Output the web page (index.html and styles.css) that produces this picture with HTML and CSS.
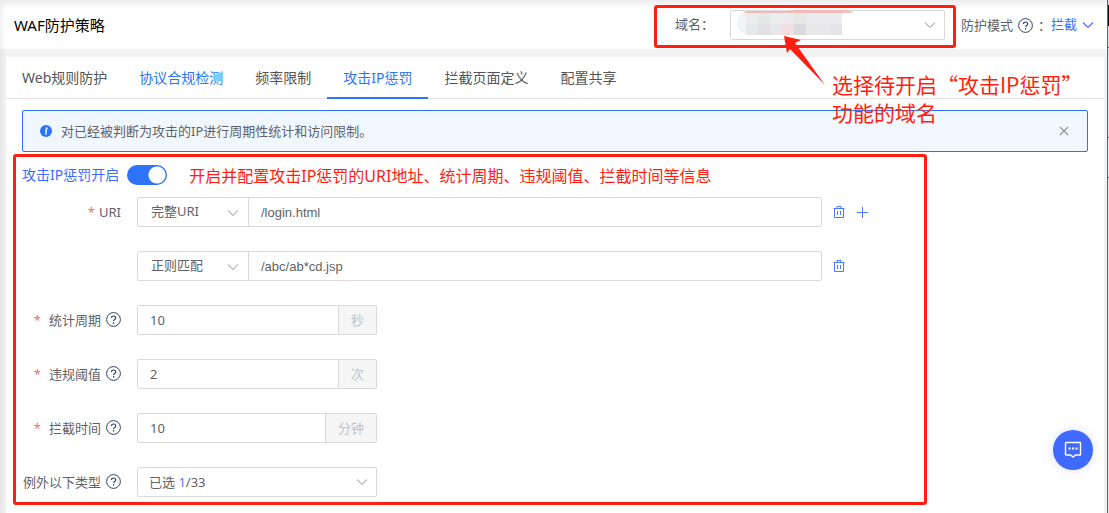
FILE: index.html
```html
<!DOCTYPE html>
<html lang="zh-cn">

<head>
    <meta charset="utf-8">
    <meta name="viewport" content="width=device-width, initial-scale=1">
    <title>WAF防护策略</title>
    <link rel="stylesheet" href="styles.css">
</head>

<body>
    <!--公用图标-->
    <svg class="symbols" aria-hidden="true">
        <symbol id="help" viewBox="0 0 15 15">
            <circle cx="7.5" cy="7.5" r="6.900" fill="none" stroke="currentColor"/>
            <path d="M5.4 6.1c0-2.9 4.3-2.7 4.3-.2 0 1.500-2.1 1.500-2.1 3.1" fill="none" stroke="currentColor" stroke-width="1.200"/>
            <circle cx="7.6" cy="10.9" r=".8" fill="currentColor"/>
        </symbol>
        <symbol id="down" viewBox="0 0 12 8">
            <path d="M1 1.5l5 5 5-5" fill="none" stroke="currentColor" stroke-width="1.200"/>
        </symbol>
        <symbol id="trash" viewBox="0 0 12 12">
            <path d="M.5 2.5h11M1.5 2.5v9h9v-9M4 2.5v-2h4v2M4.5 5v4M7.5 5v4" fill="none" stroke="currentColor"/>
        </symbol>
    </svg>

    <div class="page">
        <header class="header">
            <h1 class="title">WAF防护策略</h1>
            <div class="domain">
                <label for="domain">域名：</label>
                <div class="select domain-select">
                    <select id="domain"><option></option></select>
                    <svg class="mask" viewBox="0 0 118 26" aria-hidden="true">
                        <path d="M17 1h-3a13 12 0 0 0 0 24h3z" fill="#f4f4f4"/>
                        <path d="M10 1h12v13h-12zM34 1h12v13h-12z" fill="#ebeeed"/>
                        <path d="M22 1h12v13h-12zM58 1h12v13h-12z" fill="#e7e7e8"/>
                        <path d="M46 1h12v13h-12zM70 1h36v13h-36z" fill="#ececef"/>
                        <path d="M10 14h12v11h-12zM34 14h12v11h-12z" fill="#e7e8eb"/>
                        <path d="M22 14h12v11h-12z" fill="#e1e1e3"/>
                        <path d="M46 14h12v11h-12z" fill="#f1dfe0"/>
                        <path d="M58 14h12v11h-12z" fill="#dadade"/>
                        <path d="M70 14h24v11h-24z" fill="#e8e8e8"/>
                        <path d="M94 14h12v11h-12z" fill="#e3e5e7"/>
                        <path d="M7 2l4-1h41l6-1h52l8 2-4 1h-104z" fill="#f4bbb6"/>
                    </svg>
                    <svg class="arrow"><use href="#down"/></svg>
                </div>
                <svg class="pointer" viewBox="0 0 42 50" aria-hidden="true">
                    <path d="M0 0l17 4-6 3 30 42L6 13l-3 4z" fill="#ff1e10"/>
                </svg>
                <p class="note note-domain"><span>选择待开启“攻击IP惩罚”</span><span>功能的域名</span></p>
            </div>
            <div class="mode">
                <label for="mode">防护模式</label>
                <svg class="help"><use href="#help"/></svg>
                <span class="colon">：</span>
                <div class="select mode-select">
                    <select id="mode"><option>拦截</option></select>
                    <svg class="arrow"><use href="#down"/></svg>
                </div>
            </div>
        </header>

        <main class="card">
            <nav class="tabs">
                <a href="#">Web规则防护</a>
                <a href="#" class="blue">协议合规检测</a>
                <a href="#">频率限制</a>
                <a href="#" class="blue active">攻击IP惩罚</a>
                <a href="#">拦截页面定义</a>
                <a href="#">配置共享</a>
            </nav>

            <div class="alert">
                <svg class="info" viewBox="0 0 12 12" aria-hidden="true">
                    <circle cx="6" cy="6" r="6" fill="#2d74fb"/>
                    <circle cx="6.700" cy="3.200" r="1" fill="#fff"/>
                    <path d="M5 5.200h1.500l-.9 3.800h1.200" fill="none" stroke="#fff" stroke-width="1.200"/>
                </svg>
                <span>对已经被判断为攻击的IP进行周期性统计和访问限制。</span>
                <button type="button" class="close" aria-label="关闭">
                    <svg viewBox="0 0 10 10"><path d="M1 1l8 8M9 1l-8 8" fill="none" stroke="#909399" stroke-width="1.200"/></svg>
                </button>
            </div>

            <form class="form">
                <div class="switch-row">
                    <label for="punish">攻击IP惩罚开启</label>
                    <input type="checkbox" id="punish" class="switch" checked>
                    <p class="note">开启并配置攻击IP惩罚的URI地址、统计周期、违规阈值、拦截时间等信息</p>
                </div>

                <div class="row">
                    <label class="label" for="uri1"><i>*</i>URI</label>
                    <div class="group uri">
                        <div class="select">
                            <select aria-label="匹配方式"><option>完整URI</option></select>
                            <svg class="arrow"><use href="#down"/></svg>
                        </div>
                        <input type="text" id="uri1" value="/login.html">
                    </div>
                    <div class="actions">
                        <button type="button" aria-label="删除"><svg><use href="#trash"/></svg></button>
                        <button type="button" aria-label="添加"><svg viewBox="0 0 12 12"><path d="M0 6.500h11M5.500 1v11" fill="none" stroke="currentColor"/></svg></button>
                    </div>
                </div>

                <div class="row">
                    <span class="label"></span>
                    <div class="group uri">
                        <div class="select">
                            <select aria-label="匹配方式"><option>正则匹配</option></select>
                            <svg class="arrow"><use href="#down"/></svg>
                        </div>
                        <input type="text" aria-label="URI" value="/abc/ab*cd.jsp">
                    </div>
                    <div class="actions">
                        <button type="button" aria-label="删除"><svg><use href="#trash"/></svg></button>
                    </div>
                </div>

                <div class="row">
                    <label class="label" for="period"><i class="wide">*</i>统计周期<svg class="help"><use href="#help"/></svg></label>
                    <div class="group number">
                        <input type="text" id="period" value="10">
                        <span class="unit">秒</span>
                    </div>
                </div>

                <div class="row">
                    <label class="label" for="limit"><i class="wide">*</i>违规阈值<svg class="help"><use href="#help"/></svg></label>
                    <div class="group number">
                        <input type="text" id="limit" value="2">
                        <span class="unit">次</span>
                    </div>
                </div>

                <div class="row">
                    <label class="label" for="block"><i class="wide">*</i>拦截时间<svg class="help"><use href="#help"/></svg></label>
                    <div class="group number">
                        <input type="text" id="block" value="10">
                        <span class="unit">分钟</span>
                    </div>
                </div>

                <div class="row">
                    <label class="label" for="except">例外以下类型<svg class="help"><use href="#help"/></svg></label>
                    <div class="select except">
                        <select id="except"><option></option></select>
                        <span class="count">已选 <b>1</b>/33</span>
                        <svg class="arrow"><use href="#down"/></svg>
                    </div>
                </div>
            </form>
        </main>
    </div>
    <div class="edge"></div>

    <button type="button" class="chat" aria-label="在线咨询">
        <svg viewBox="0 0 18 18">
            <path d="M2 1.500h14q.5 0 .5.5v11.500q0 .5-.5.5h-4.500l-2.500 2-2.500-2h-4.500q-.5 0-.5-.5v-11.500q0-.5.5-.5z" fill="none" stroke="#fff" stroke-width="1.400"/>
            <path d="M4.500 7.500h2M8 7.500h2M11.500 7.500h2" stroke="#fff" stroke-width="2"/>
        </svg>
    </button>
</body>
</html>
```
FILE: styles.css
```css
*{
    box-sizing: border-box;
}
body{
    display: flex;
    min-height: 100vh;
    margin: 0;
    background: #f2f2f2;
    color: #606266;
    font-family: "Noto Sans", "Noto Sans CJK SC", sans-serif;
    font-size: 13px;
    line-height: 20px;
}
p, h1{
    margin: 0;
}
input, select, button{
    margin: 0;
    color: inherit;
    font: inherit;
}
button{
    display: flex;
    padding: 0;
    border: none;
    background: none;
}
.symbols{
    position: absolute;
    width: 0;
    height: 0;
}
.page{
    display: flex;
    flex: 1;
    flex-direction: column;
    min-width: 0;
    background: linear-gradient(to right, #e6e6e6, #f2f2f2 6px);
}
/*右侧窗口边线*/
.edge{
    width: 2px;
    border-left: 1px solid #2f6db5;
    background: linear-gradient(#d8dfe8 5px, #111 5px, #111 26px, #d8dfe8 26px, #d8dfe8 47px, #555 47px, #555 48px, #d8dfe8 48px, #d8dfe8 137px, #2d74fb 137px, #2d74fb 138px, #e6eef8 138px, #e6eef8 177px, #2d74fb 177px, #2d74fb 178px, #e4e4e4 178px);
}

/*顶部*/
.header{
    display: flex;
    align-items: center;
    height: 49px;
    padding: 4px 13px 0 14px;
    background: linear-gradient(#ececec, rgba(255,255,255,0) 9px), linear-gradient(to right, #f2f2f2, #fff 6px);
}
.title{
    padding-bottom: 3px;
    color: #000;
    font-size: 15px;
    font-weight: normal;
}
.domain{
    position: relative;
    display: flex;
    align-items: center;
    margin-left: auto;
    padding: 2px 8px 5px 18px;
    border: 3px solid #ff1e10;
    border-radius: 3px;
}
.domain label{
    padding-bottom: 2px;
}
.domain-select{
    width: 215px;
    margin-left: 16px;
}
.mask{
    position: absolute;
    top: 0;
    left: 6px;
    width: 118px;
    height: 26px;
}
.pointer{
    position: absolute;
    top: 28px;
    left: 127px;
    width: 42px;
    height: 50px;
}
.note{
    padding-top: 2px;
    color: #ff1e10;
    font-size: 16px;
}
.note-domain{
    position: absolute;
    top: 60px;
    left: 175px;
    font-family: "Noto Sans CJK SC", sans-serif;
    font-size: 21px;
    line-height: 28px;
    white-space: nowrap;
}
.note-domain span{
    display: block;
}
.mode{
    display: flex;
    align-items: center;
    margin-left: 5px;
    padding-bottom: 3px;
}
.help{
    width: 15px;
    height: 15px;
    margin-left: 5px;
    color: #34435e;
}
.colon{
    width: 18px;
    padding-left: 5px;
}
.mode-select{
    width: 43px;
    color: #2d74fb;
}

/*下拉框*/
.select{
    position: relative;
}
.select select{
    display: block;
    width: 100%;
    height: 30px;
    padding: 0 30px 0 12px;
    border: 1px solid #d9d9d9;
    border-radius: 2px;
    background: #fff;
    appearance: none;
}
.select .arrow{
    position: absolute;
    top: 11px;
    right: 9px;
    width: 12px;
    height: 8px;
    color: #b8bcc4;
    pointer-events: none;
}
.mode-select select{
    padding: 0 0 2px;
    border: none;
    background: none;
}
.mode-select .arrow{
    right: 0;
    color: #4d6bfe;
}

/*内容区*/
.card{
    flex: 1;
    margin: 8px 3px 0 6px;
    background: #fff;
}
.tabs{
    display: flex;
    height: 42px;
    border-bottom: 1px solid #e4e4e4;
}
.tabs a{
    height: 42px;
    padding: 0 16px;
    color: #555;
    font-size: 14px;
    line-height: 42px;
    text-decoration: none;
    white-space: nowrap;
}
.tabs a.blue{
    color: #2d74fb;
}
.tabs a.active{
    border-bottom: 2px solid #2d74fb;
}
.alert{
    display: flex;
    align-items: center;
    height: 42px;
    margin: 11px 16px 2px;
    padding: 0 18px 0 17px;
    border: 1px solid #2d74fb;
    border-radius: 2px;
    background: #f0f7ff;
}
.info{
    width: 12px;
    height: 12px;
    margin-right: 9px;
}
.close{
    margin-left: auto;
}
.close svg{
    width: 10px;
    height: 10px;
}

/*表单*/
.form{
    max-width: 914px;
    margin-left: 7px;
    padding: 3px 6px 5px;
    border: 3px solid #ff1e10;
    border-radius: 3px;
}
.switch-row{
    display: flex;
    align-items: center;
    height: 30px;
    margin-bottom: 7px;
    color: #4069ff;
    font-size: 14px;
}
.switch{
    width: 40px;
    height: 20px;
    margin: 0 22px 0 8px;
    border-radius: 10px;
    background: radial-gradient(circle at 30px 10px, #fff 8px, #2d74fb 9px);
    appearance: none;
}
.row{
    display: flex;
    align-items: center;
    margin-bottom: 24px;
}
.row:last-child{
    margin-bottom: 0;
}
.label{
    display: flex;
    align-items: center;
    justify-content: flex-end;
    width: 115px;
    padding: 0 16px 1px 0;
    white-space: nowrap;
}
.label i{
    margin-right: 4px;
    color: #f56c6c;
    font-style: normal;
}
.label i.wide{
    margin-right: 8px;
}
.group{
    display: flex;
    height: 30px;
    border: 1px solid #d9d9d9;
    border-radius: 2px;
}
.group input{
    flex: 1;
    min-width: 0;
    padding: 0 12px;
    border: none;
    background: none;
}
.uri{
    flex: 1;
    max-width: 685px;
}
.uri .select{
    width: 111px;
    border-right: 1px solid #d9d9d9;
}
.uri select{
    height: 28px;
    padding: 0 30px 2px 13px;
    border: none;
    background: none;
}
.uri input{
    padding-top: 2px;
    font-family: "Liberation Sans", Arial, sans-serif;
}
.number, .except{
    width: 240px;
}
.unit{
    padding: 0 12px;
    border-left: 1px solid #d9d9d9;
    background: #f5f5f5;
    color: #c0c4cc;
    line-height: 28px;
}
.actions{
    display: flex;
    gap: 12px;
    margin-left: 11px;
    color: #4d7bff;
}
.actions svg{
    width: 12px;
    height: 12px;
}
.count{
    position: absolute;
    top: 5px;
    left: 12px;
    pointer-events: none;
}
.count b{
    color: #6a6cff;
    font-weight: normal;
}

/*在线咨询*/
.chat{
    position: fixed;
    right: 16px;
    bottom: 43px;
    align-items: center;
    justify-content: center;
    width: 40px;
    height: 40px;
    border-radius: 50%;
    background: #4069ff;
    box-shadow: 0 0 10px rgba(64,105,255,.2);
}
.chat svg{
    width: 18px;
    height: 18px;
}
```
